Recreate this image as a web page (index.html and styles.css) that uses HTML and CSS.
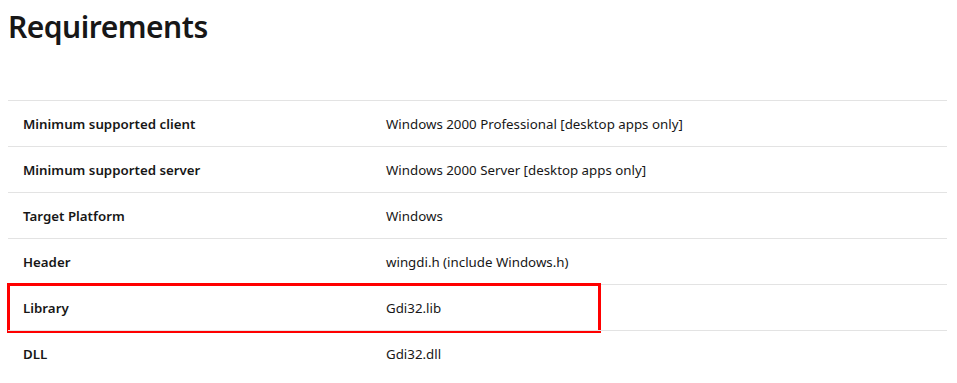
FILE: index.html
```html
<!DOCTYPE html>
<html>
<head>
<meta charset="utf-8">
<link rel="stylesheet" href="styles.css">
</head>
<body>
<h1 class="title">Requirements</h1>
<div class="table">
  <div class="row"><div class="key">Minimum supported client</div><div class="val">Windows 2000 Professional [desktop apps only]</div></div>
  <div class="row"><div class="key">Minimum supported server</div><div class="val">Windows 2000 Server [desktop apps only]</div></div>
  <div class="row"><div class="key">Target Platform</div><div class="val">Windows</div></div>
  <div class="row"><div class="key">Header</div><div class="val">wingdi.h (include Windows.h)</div></div>
  <div class="row highlighted"><div class="key">Library</div><div class="val">Gdi32.lib</div><span class="mark"></span></div>
  <div class="row last"><div class="key">DLL</div><div class="val">Gdi32.dll</div></div>
</div>
</body>
</html>
```
FILE: styles.css
```css
html, body {
  margin: 0;
  padding: 0;
  background: #ffffff;
}
body {
  padding: 0 10px 0 8px;
  font-family: "Noto Sans", "Open Sans", sans-serif;
  color: #171717;
}
.title {
  margin: 0;
  padding-top: 7px;
  height: 100px;
  box-sizing: border-box;
  font-size: 30px;
  font-weight: 600;
  line-height: 40px;
  letter-spacing: -0.5px;
}
.table {
  display: flex;
  flex-direction: column;
}
.row {
  display: grid;
  grid-template-columns: 363px 1fr;
  border-top: 1px solid #e3e3e3;
  height: 46px;
  box-sizing: border-box;
  align-items: center;
  font-size: 13.3px;
  position: relative;
}
.key {
  padding-left: 15px;
  font-weight: 600;
}
.val {
  padding-left: 15px;
  font-weight: 400;
}
.mark {
  position: absolute;
  left: -1px;
  top: -2px;
  width: 594px;
  height: 50px;
  box-sizing: border-box;
  border: 3px solid #ff0000;
}
```
